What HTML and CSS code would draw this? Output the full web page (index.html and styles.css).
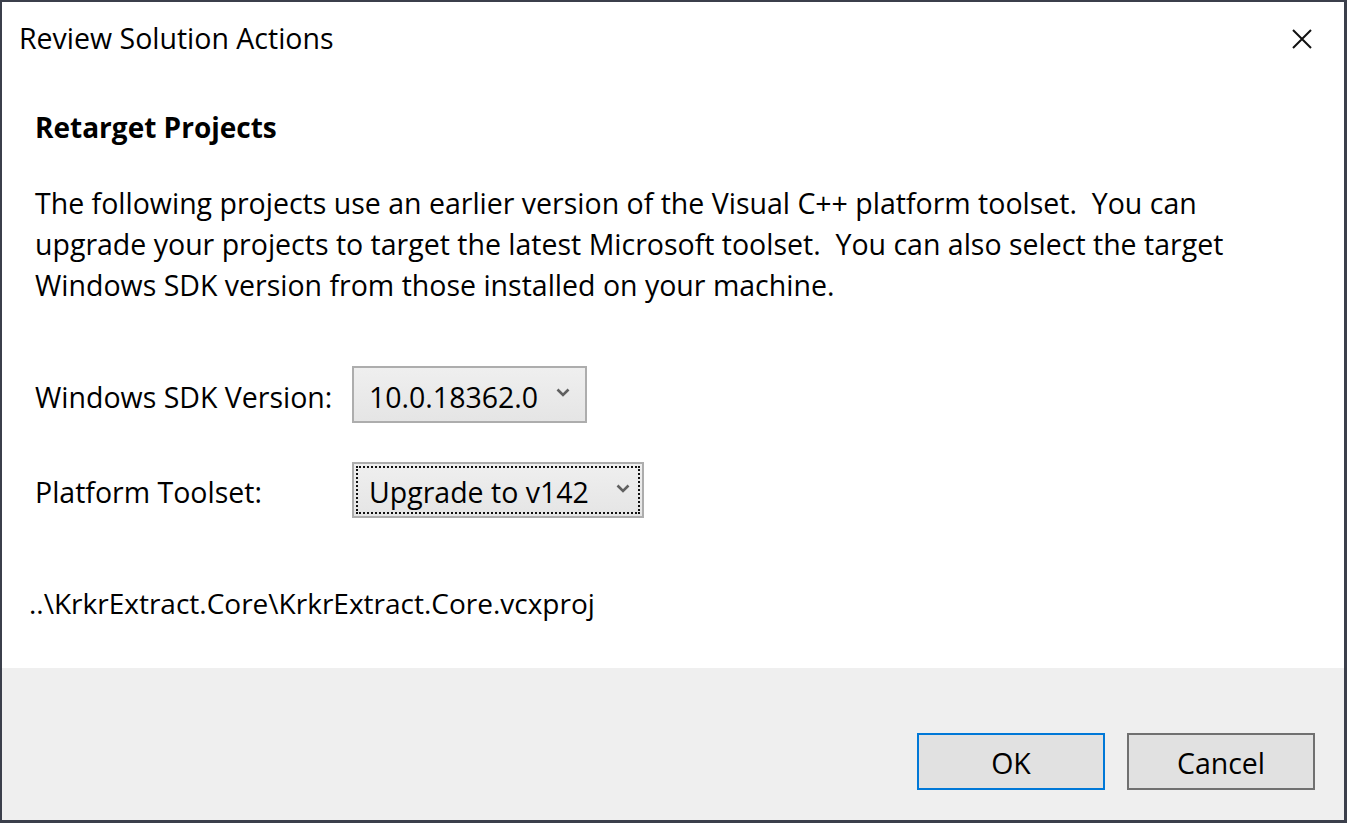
FILE: index.html
```html
<!DOCTYPE html>
<html lang="en">
<head>
    <meta charset="UTF-8">
    <title>Review Solution Actions</title>
    <link rel="stylesheet" href="styles.css">
</head>
<body>
    <div class="window">
        <!-- Title bar -->
        <div class="titlebar">
            <span class="title">Review Solution Actions</span>
            <span class="close">
                <svg width="20" height="20" viewBox="0 0 20 20">
                    <path d="M1 1 L19 19 M19 1 L1 19" stroke="#111" stroke-width="2" fill="none"/>
                </svg>
            </span>
        </div>

        <!-- Content -->
        <div class="content">
            <h1>Retarget Projects</h1>
            <p class="intro">
                The following projects use an earlier version of the Visual C++ platform toolset.&nbsp; You can<br>
                upgrade your projects to target the latest Microsoft toolset.&nbsp; You can also select the target<br>
                Windows SDK version from those installed on your machine.
            </p>

            <div class="field-row sdk-row">
                <label>Windows SDK Version:</label>
                <div class="combo combo-sdk">
                    <span class="combo-text">10.0.18362.0</span>
                    <svg class="chevron" width="14" height="9" viewBox="0 0 14 9">
                        <path d="M1.5 1.5 L7 7 L12.5 1.5" stroke="#606060" stroke-width="2.6" fill="none"/>
                    </svg>
                </div>
            </div>

            <div class="field-row toolset-row">
                <label>Platform Toolset:</label>
                <div class="combo combo-toolset">
                    <div class="focus-ring">
                        <span class="combo-text">Upgrade to v142</span>
                        <svg class="chevron" width="14" height="9" viewBox="0 0 14 9">
                            <path d="M1.5 1.5 L7 7 L12.5 1.5" stroke="#606060" stroke-width="2.6" fill="none"/>
                        </svg>
                    </div>
                </div>
            </div>

            <div class="project-path">..\KrkrExtract.Core\KrkrExtract.Core.vcxproj</div>
        </div>

        <!-- Footer -->
        <div class="footer">
            <button class="btn btn-default">OK</button>
            <button class="btn">Cancel</button>
        </div>
    </div>
</body>
</html>
```

FILE: styles.css
```css
/* Global */
html, body {
    margin: 0;
    padding: 0;
    height: 100%;
}

body {
    font-family: "Open Sans", "Noto Sans", sans-serif;
    font-size: 28.5px;
    color: #000;
    background-color: #3b3f4b;
    overflow: hidden;
}

/* Window frame */
.window {
    box-sizing: border-box;
    width: 1347px;
    height: 823px;
    border-style: solid;
    border-color: #3b3f4b;
    border-width: 2px 3px 3px 2px;
    background-color: #fff;
    display: flex;
    flex-direction: column;
}

/* Title bar */
.titlebar {
    height: 74px;
    display: flex;
    align-items: center;
    justify-content: space-between;
    padding-left: 17px;
    padding-right: 32px;
}

.title {
    font-size: 28.5px;
    margin-top: -2px;
}

.close {
    display: flex;
}

/* Content */
.content {
    flex: 1;
    padding-left: 33px;
}

h1 {
    font-size: 28px;
    font-weight: bold;
    margin: 33px 0 0 0;
    line-height: 36px;
}

.intro {
    margin: 38px 0 0 0;
    line-height: 41px;
    white-space: nowrap;
}

.field-row {
    display: flex;
    align-items: center;
}

.field-row label {
    width: 317px;
    padding-top: 4px;
}

.sdk-row {
    margin-top: 60px;
}

.toolset-row {
    margin-top: 39px;
}

/* Combo boxes */
.combo {
    box-sizing: border-box;
    height: 57px;
    border: 2px solid #adadad;
    background: linear-gradient(#efefef, #e5e5e5);
    display: flex;
    align-items: center;
}

.combo-text {
    padding-top: 4px;
}

.combo-sdk {
    width: 235px;
    padding: 0 15px 0 15px;
    justify-content: space-between;
}

.combo-toolset {
    width: 292px;
    height: 56px;
    padding: 2px;
}

.focus-ring {
    box-sizing: border-box;
    width: 100%;
    height: 100%;
    border: 2px dotted #111;
    display: flex;
    align-items: center;
    justify-content: space-between;
    padding: 0 8px 0 11px;
}

.chevron {
    margin-top: -4px;
}

.project-path {
    font-size: 28px;
    margin-top: 66px;
    margin-left: -6px;
}

/* Footer */
.footer {
    height: 152px;
    background-color: #efefef;
    display: flex;
    justify-content: flex-end;
    align-items: flex-start;
    gap: 22px;
    padding: 65px 29px 0 0;
    box-sizing: border-box;
}

.btn {
    box-sizing: border-box;
    width: 188px;
    height: 57px;
    border: 2px solid #707070;
    background-color: #e1e1e1;
    font-family: inherit;
    font-size: 28.5px;
    color: #000;
    padding: 2px 0 0 0;
}

.btn-default {
    border-color: #0078d7;
}
```
